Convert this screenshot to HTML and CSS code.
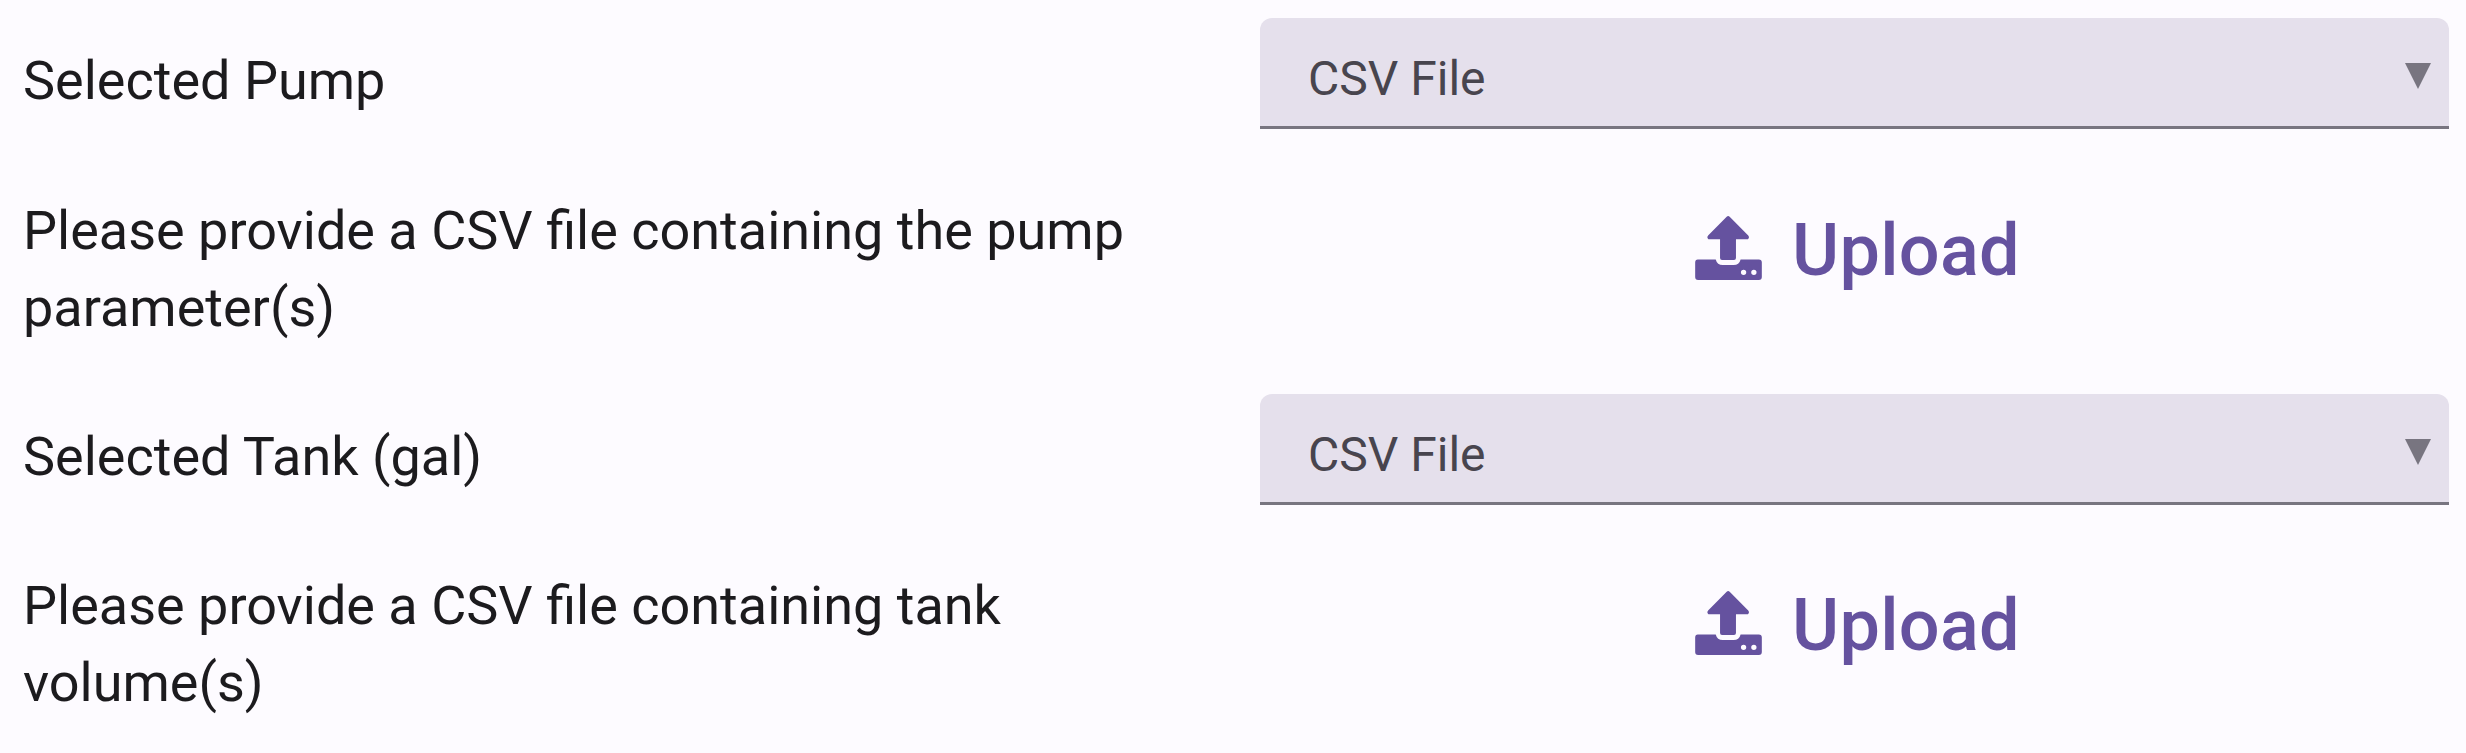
FILE: index.html
```html
<!DOCTYPE html>
<html lang="en">
<head>
<meta charset="utf-8">
<title>Pump and tank</title>
<link rel="stylesheet" href="styles.css">
</head>
<body>
<svg width="0" height="0" class="defs">
  <symbol id="upload" viewBox="75 77 201 193">
    <path d="M170 79q4.500-4 9 0L235 136q5 6-1 11H198V204q0 6-6 6H156q-6 0-6-6V147H115q-6-5-1-11Z"/>
    <path fill-rule="evenodd" d="M83 208H137C140 219 147 225 158 225H191C202 225 209 219 212 208H267q9 0 9 9V261q0 9-9 9H84q-9 0-9-9V217q0-9 8-9ZM213 247a8 8 0 1 0 16 0a8 8 0 1 0-16 0ZM244 247a8 8 0 1 0 16 0a8 8 0 1 0-16 0Z"/>
  </symbol>
</svg>
<main class="form">
  <section class="group pump">
    <div class="label">Selected Pump</div>
    <div class="field">
      <div class="select"><span>CSV File</span><svg class="caret" viewBox="0 0 26 26"><path d="M0 0H26L13 26Z"/></svg></div>
    </div>
    <div class="label">Please provide a CSV file containing the pump parameter(s)</div>
    <div class="upload"><svg class="icon"><use href="#upload"/></svg><span>Upload</span></div>
  </section>
  <section class="group tank">
    <div class="label">Selected Tank (gal)</div>
    <div class="field">
      <div class="select"><span>CSV File</span><svg class="caret" viewBox="0 0 26 26"><path d="M0 0H26L13 26Z"/></svg></div>
    </div>
    <div class="label">Please provide a CSV file containing tank volume(s)</div>
    <div class="upload"><svg class="icon"><use href="#upload"/></svg><span>Upload</span></div>
  </section>
</main>
</body>
</html>
```
FILE: styles.css
```css
* { box-sizing: border-box; }
body {
  margin: 0;
  background: #fdfbff;
  color: #1c1b1e;
  font-family: Roboto, sans-serif;
  overflow: hidden;
}
.defs { display: block; }
.form { width: 2466px; height: 753px; }
.group {
  display: grid;
  grid-template-columns: 1260px 1189px;
}
.pump { grid-template-rows: 150px 226px; }
.tank { grid-template-rows: 149px 228px; }
.label {
  padding: 42px 100px 0 23px;
  font-size: 54px;
  line-height: 77px;
}
.field { padding-top: 18px; }
.select {
  display: flex;
  align-items: center;
  justify-content: space-between;
  height: 111px;
  padding: 14px 18px 0 48px;
  border-bottom: 3px solid #787580;
  border-radius: 12px 12px 0 0;
  background: #e5e0ec;
  color: #48454e;
  font-size: 48px;
  line-height: 72px;
}
.caret { width: 26px; height: 26px; margin-bottom: 6px; fill: #787580; }
.upload {
  display: flex;
  align-items: flex-start;
  justify-content: center;
  gap: 30px;
  padding: 51px 0 0 6px;
  color: #65529f;
  font-size: 72px;
  font-weight: 500;
  letter-spacing: 0.3px;
  line-height: 100px;
}
.icon { width: 67px; height: 64px; margin-top: 15px; fill: currentColor; }
```
